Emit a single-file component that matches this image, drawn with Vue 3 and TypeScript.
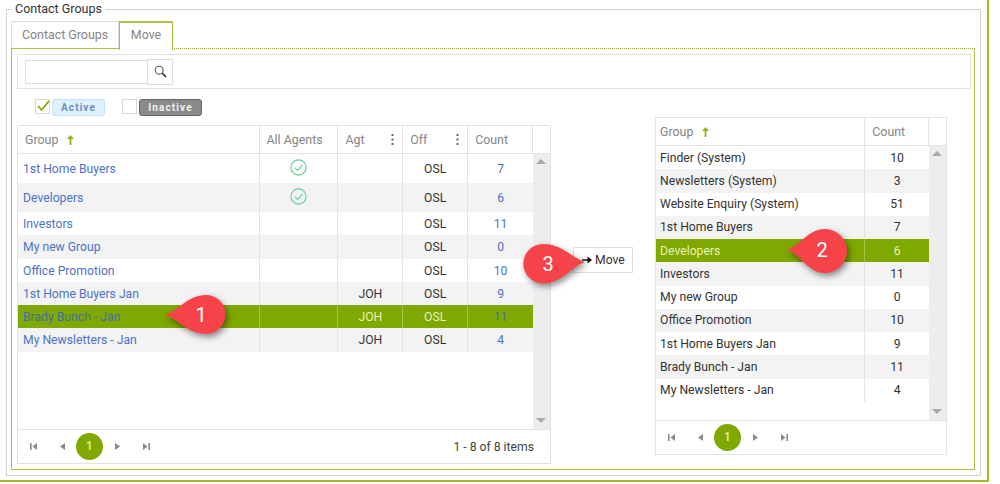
<script setup lang="ts">
interface LeftRow { name: string; all: boolean; agt: string; count: number; selected?: boolean; tall?: boolean }
const leftRows: LeftRow[] = [
  { name: '1st Home Buyers', all: true, agt: '', count: 7, tall: true },
  { name: 'Developers', all: true, agt: '', count: 6, tall: true },
  { name: 'Investors', all: false, agt: '', count: 11 },
  { name: 'My new Group', all: false, agt: '', count: 0 },
  { name: 'Office Promotion', all: false, agt: '', count: 10 },
  { name: '1st Home Buyers Jan', all: false, agt: 'JOH', count: 9 },
  { name: 'Brady Bunch - Jan', all: false, agt: 'JOH', count: 11, selected: true },
  { name: 'My Newsletters - Jan', all: false, agt: 'JOH', count: 4 },
]
const rightRows = [
  { name: 'Finder (System)', count: 10 },
  { name: 'Newsletters (System)', count: 3 },
  { name: 'Website Enquiry (System)', count: 51 },
  { name: '1st Home Buyers', count: 7 },
  { name: 'Developers', count: 6, selected: true },
  { name: 'Investors', count: 11 },
  { name: 'My new Group', count: 0 },
  { name: 'Office Promotion', count: 10 },
  { name: '1st Home Buyers Jan', count: 9 },
  { name: 'Brady Bunch - Jan', count: 11 },
  { name: 'My Newsletters - Jan', count: 4 },
]
const callouts = [
  { d: 'M165 315C178 311 188 295 206 295A19.5 19.5 0 0 1 206 334C188 334 178 319 165 315Z', n: '1', x: 201, y: 322 },
  { d: 'M787 250C800 246 808 229 825 229A21.7 21.7 0 0 1 825 273C808 273 800 254 787 250Z', n: '2', x: 822, y: 257 },
  { d: 'M585 262C572 258 562 244 543 244A19.7 19.7 0 0 0 543 283.4C562 283.4 572 266 585 262Z', n: '3', x: 548, y: 271 },
]
</script>

<template>
  <div class="frame">
    <fieldset class="set">
      <legend class="legend">Contact Groups</legend>
      <div class="tabs">
        <div class="tab">Contact Groups</div>
        <div class="tab active">Move</div>
      </div>
      <div class="panel">
        <div class="searchbar">
          <input class="search-input" type="text" aria-label="Search" />
          <button class="search-btn" aria-label="Search">
            <svg width="13" height="13" viewBox="0 0 13 13"><circle cx="5.2" cy="5.2" r="3.9" fill="none" stroke="#555" stroke-width="1.1" /><path d="M8.2 8.2 12 12" stroke="#333" stroke-width="1.7" /></svg>
          </button>
        </div>
        <div class="columns">
          <div class="left-col">
            <div class="filters">
              <span class="check">
                <svg width="14" height="12" viewBox="0 0 14 12"><path d="M2 6 5.5 10 13 1" fill="none" stroke="#7fa800" stroke-width="1.7" /></svg>
              </span>
              <span class="badge on">Active</span>
              <span class="check second"></span>
              <span class="badge off">Inactive</span>
            </div>
            <div class="grid main">
              <div class="head">
                <div class="hc c-group">Group<svg class="sort" width="7" height="10" viewBox="0 0 7 10"><path d="M3.5 0 7 4H4.4V10H2.6V4H0Z" fill="#8fb31a" /></svg></div>
                <div class="hc c-all">All Agents</div>
                <div class="hc c-mid">Agt<svg class="kebab" width="3" height="11" viewBox="0 0 3 11"><path d="M.5 0h2v2h-2zM.5 4.5h2v2h-2zM.5 9h2v2h-2z" fill="#666" /></svg></div>
                <div class="hc c-mid">Off<svg class="kebab" width="3" height="11" viewBox="0 0 3 11"><path d="M.5 0h2v2h-2zM.5 4.5h2v2h-2zM.5 9h2v2h-2z" fill="#666" /></svg></div>
                <div class="hc c-count">Count</div>
                <div class="hc c-end"></div>
              </div>
              <div class="body">
                <div class="rows">
                  <div v-for="r in leftRows" :key="r.name" class="row" :class="{ tall: r.tall, sel: r.selected }">
                    <div class="td c-group link">{{ r.name }}</div>
                    <div class="td c-all center">
                      <svg v-if="r.all" class="ok" width="17" height="17" viewBox="0 0 17 17"><circle cx="8.5" cy="8.5" r="7.6" fill="none" stroke="#62cf9b" stroke-width="1.1" /><path d="M4.8 8.6 7.6 11.4 12.6 5.8" fill="none" stroke="#62cf9b" stroke-width="1.1" /></svg>
                    </div>
                    <div class="td c-mid center plain">{{ r.agt }}</div>
                    <div class="td c-mid center plain">OSL</div>
                    <div class="td c-count center link">{{ r.count }}</div>
                  </div>
                </div>
                <div class="scroll">
                  <i class="up"></i>
                  <i class="down"></i>
                </div>
              </div>
              <div class="pager">
                <svg class="pi" width="9" height="9" viewBox="0 0 9 9"><path d="M1 1h1.6v7H1zM8 1v7L3.4 4.5Z" /></svg>
                <svg class="pi" width="9" height="9" viewBox="0 0 9 9"><path d="M7 1v7L2 4.5Z" /></svg>
                <span class="pnum">1</span>
                <svg class="pi" width="9" height="9" viewBox="0 0 9 9"><path d="M2 1v7L7 4.5Z" /></svg>
                <svg class="pi" width="9" height="9" viewBox="0 0 9 9"><path d="M1 1v7L5.6 4.5ZM6.4 1H8v7H6.4z" /></svg>
                <span class="pinfo">1 - 8 of 8 items</span>
              </div>
            </div>
          </div>
          <button class="move">
            <svg width="10" height="8" viewBox="0 0 10 8"><path d="M0 3.2H5.5V0.6L10 4 5.5 7.4V4.8H0Z" fill="#111" /></svg>
            Move
          </button>
          <div class="grid right">
            <div class="head">
              <div class="hc r-group">Group<svg class="sort" width="7" height="10" viewBox="0 0 7 10"><path d="M3.5 0 7 4H4.4V10H2.6V4H0Z" fill="#8fb31a" /></svg></div>
              <div class="hc r-count">Count</div>
              <div class="hc c-end"></div>
            </div>
            <div class="body">
              <div class="rows">
                <div v-for="r in rightRows" :key="r.name" class="row" :class="{ sel: r.selected }">
                  <div class="td r-group plain">{{ r.name }}</div>
                  <div class="td r-count center plain">{{ r.count }}</div>
                </div>
              </div>
              <div class="scroll">
                <i class="up"></i>
                <i class="down"></i>
              </div>
            </div>
            <div class="pager">
              <svg class="pi" width="9" height="9" viewBox="0 0 9 9"><path d="M1 1h1.6v7H1zM8 1v7L3.4 4.5Z" /></svg>
              <svg class="pi" width="9" height="9" viewBox="0 0 9 9"><path d="M7 1v7L2 4.5Z" /></svg>
              <span class="pnum">1</span>
              <svg class="pi" width="9" height="9" viewBox="0 0 9 9"><path d="M2 1v7L7 4.5Z" /></svg>
              <svg class="pi" width="9" height="9" viewBox="0 0 9 9"><path d="M1 1v7L5.6 4.5ZM6.4 1H8v7H6.4z" /></svg>
            </div>
          </div>
        </div>
      </div>
    </fieldset>
    <svg class="callouts" width="1000" height="484" viewBox="0 0 1000 484">
      <g v-for="c in callouts" :key="c.n">
        <path :d="c.d" fill="#f64349" class="drop" />
        <text :x="c.x" :y="c.y" text-anchor="middle" class="callnum">{{ c.n }}</text>
      </g>
    </svg>
  </div>
</template>

<style>
html, body { margin: 0; background: #fff; }
</style>

<style scoped>
.frame {
  position: relative;
  box-sizing: border-box;
  width: 989px;
  height: 482px;
  padding: 2px 0 0 6px;
  border-right: 2px solid #9dbd2e;
  border-bottom: 2px solid #9dbd2e;
  font: 12px/14px Roboto, "Liberation Sans", sans-serif;
  color: #333;
  overflow: visible;
}
.set {
  box-sizing: border-box;
  width: 975px;
  height: 474px;
  margin: 0;
  padding: 5px 5px 0 4px;
  border: 1px solid #d2d2d2;
  min-width: 0;
}
.legend { padding: 0 3px; margin-left: 1px; font-size: 12.5px; line-height: 14px; color: #333; }
.tabs { display: flex; height: 27px; }
.tab {
  box-sizing: border-box;
  width: 108px;
  padding-top: 6px;
  border: 1px solid #dcdcdc;
  border-bottom: 0;
  text-align: center;
  color: #858585;
  font-size: 12.4px;
}
.tab.active {
  width: 54px;
  border: 1px solid #a6c34a;
  border-bottom: 0;
  border-top-width: 2px;
  padding-top: 5px;
  position: relative;
  background: #fff;
  height: 29px;
  z-index: 1;
}
.panel {
  box-sizing: border-box;
  width: 964px;
  height: 422px;
  padding: 5px 3px 0 5px;
  border: 1px solid #a6c34a;
  border-top: 1px dotted #93b520;
  position: relative;
}
.panel::before {
  content: "";
  position: absolute;
  left: -1px;
  top: -1px;
  width: 108px;
  height: 1px;
  background: #a6c34a;
}
.searchbar {
  box-sizing: border-box;
  display: flex;
  align-items: center;
  width: 954px;
  height: 35px;
  padding-left: 7px;
  border: 1px solid #e2e2e2;
}
.search-input {
  box-sizing: border-box;
  width: 122px;
  height: 24px;
  margin: 0;
  border: 1px solid #dedede;
  border-right: 0;
  padding: 0;
  outline: 0;
}
.search-btn {
  box-sizing: border-box;
  width: 26px;
  height: 26px;
  padding: 0;
  border: 1px solid #dedede;
  background: #fff;
  display: flex;
  align-items: center;
  justify-content: center;
}
.columns { display: flex; align-items: flex-start; }
.left-col { width: 534px; flex: none; }
.filters { display: flex; align-items: flex-start; height: 16px; padding: 10px 0 10px 18px; }
.check {
  box-sizing: border-box;
  width: 15px;
  height: 15px;
  border: 1px solid #d8d8d8;
  background: #fff;
}
.check svg { display: block; }
.check.second { margin-left: 17px; }
.badge {
  box-sizing: border-box;
  height: 17px;
  margin-left: 2px;
  border-radius: 3px;
  font-size: 10px;
  line-height: 15px;
  font-weight: 700;
  letter-spacing: 1.1px;
  text-align: center;
}
.badge.on { width: 53px; background: #def0fd; border: 1px solid #c5e0f6; color: #6a8fc0; }
.badge.off { width: 63px; background: #8a8a8a; border: 1px solid #666; color: #f2f2f2; }
.grid {
  box-sizing: border-box;
  width: 534px;
  height: 338px;
  border: 1px solid #e2e2e2;
  display: flex;
  flex-direction: column;
}
.grid.main { height: 339px; }
.grid.right { width: 292px; margin: 28px 0 0 22px; flex: none; }
.head { display: flex; height: 28px; flex: none; border-bottom: 1px solid #e2e2e2; box-sizing: border-box; }
.hc {
  box-sizing: border-box;
  display: flex;
  align-items: center;
  padding-left: 7px;
  border-right: 1px solid #e2e2e2;
  color: #858585;
  font-size: 12.4px;
}
.sort { margin-left: 9px; }
.kebab { margin-left: auto; margin-right: 8px; }
.c-group { width: 242px; }
.c-all { width: 79px; }
.c-mid { width: 65px; }
.c-count { width: 65px; }
.c-end { width: 17px; border-right: 0; }
.r-group { width: 210px; }
.r-count { width: 64px; }
.body { flex: 1; display: flex; min-height: 0; }
.rows { flex: 1; min-width: 0; }
.row { display: flex; height: 23.25px; }
.row.tall { height: 29px; }
.row:nth-child(even) { background: #f3f3f3; }
.row.sel { background: #7fa800; }
.td {
  box-sizing: border-box;
  display: flex;
  align-items: center;
  padding-left: 5px;
  border-right: 1px solid #e4e4e4;
  font-size: 12.2px;
  white-space: nowrap;
  color: #333;
}
.main .td { padding-top: 1px; }
.right .r-group { padding-left: 4px; }
.row.sel .td { border-right-color: #a5c24d; }
.td:last-child { border-right: 0; }
.center { justify-content: center; padding-left: 0; }
.link { color: #4f72c8; }
.row.sel .plain { color: #e9f2b8; }
.row.sel .link { color: #466ea8; }
.ok { margin-top: -3px; }
.scroll {
  width: 17px;
  flex: none;
  background: #ededed;
  position: relative;
}
.up, .down {
  position: absolute;
  left: 3px;
  width: 0;
  height: 0;
  border-left: 5px solid transparent;
  border-right: 5px solid transparent;
}
.up { top: 5px; border-bottom: 5px solid #aaa; }
.down { bottom: 6px; border-top: 5px solid #aaa; }
.pager {
  box-sizing: border-box;
  flex: none;
  height: 34px;
  display: flex;
  align-items: center;
  padding-left: 11px;
  border-top: 1px solid #e2e2e2;
}
.pi { fill: #8a8a8a; flex: none; }
.pi + .pi { margin-left: 20px; }
.pi:nth-child(2) { margin-left: 20px; margin-right: 9px; }
.pnum {
  width: 27px;
  height: 27px;
  border-radius: 50%;
  background: #7fa800;
  color: #e9f2b8;
  font-weight: 500;
  text-align: center;
  line-height: 27px;
  flex: none;
}
.pnum + .pi { margin-left: 10px; }
.pinfo { margin-left: auto; margin-right: 16px; color: #444; font-size: 12.2px; }
.move {
  box-sizing: border-box;
  flex: none;
  width: 60px;
  height: 26px;
  margin: 158px 0 0 22px;
  padding: 0 0 0 8px;
  border: 1px solid #dedede;
  background: #fff;
  color: #333;
  display: flex;
  align-items: center;
  gap: 3px;
  font: 12.2px Roboto, "Liberation Sans", sans-serif;
}
.callouts { position: absolute; left: 0; top: 0; pointer-events: none; }
.drop { filter: drop-shadow(2px 3px 3px rgba(0, 0, 0, 0.45)); }
.callnum { font: 20px Roboto, "Liberation Sans", sans-serif; fill: #fff; }
</style>
